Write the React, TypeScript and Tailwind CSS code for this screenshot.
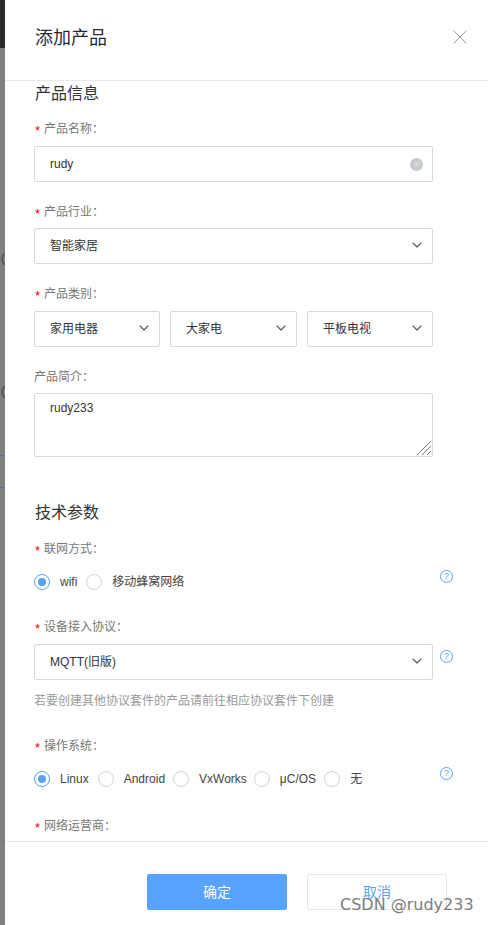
import React from 'react';
import { ChevronDown, X } from 'lucide-react';

const Label = ({ text, required = true, className = '' }: { text: string; required?: boolean; className?: string }) => (
  <div className={`flex items-center h-[18px] text-[12px] text-[#777] ${className}`}>
    {required && <span className="text-[#f00] w-[10px] text-[13px] leading-[18px] pl-[1px] translate-y-[2px]">*</span>}
    <span>{text}：</span>
  </div>
);

const Select = ({ value, className = '' }: { value: string; className?: string }) => (
  <div className={`flex items-center justify-between h-[36px] border border-[#d9d9d9] rounded-[2px] pl-[15px] pr-[7px] text-[12px] text-[#333] ${className}`}>
    <span>{value}</span>
    <ChevronDown className="w-[16px] h-[16px] text-[#555] -mt-[2px]" strokeWidth={1.6} />
  </div>
);

const Help = ({ className = '' }: { className?: string }) => (
  <div className={`w-[13px] h-[13px] rounded-full border border-[#5aa2f8] text-[#5aa2f8] text-[9px] leading-[11px] text-center shrink-0 ${className}`}>?</div>
);

const Radio = ({ text, checked = false, className = '' }: { text: string; checked?: boolean; className?: string }) => (
  <div className={`flex items-center ${className}`}>
    <div className={`w-[16px] h-[16px] rounded-full flex items-center justify-center ${checked ? 'border-[1.5px] border-[#57a3f3]' : 'border border-[#d4d4d4]'}`}>
      {checked && <div className="w-[8px] h-[8px] rounded-full bg-[#57a3f3]" />}
    </div>
    <span className="ml-[10px] text-[12px] text-[#444]">{text}</span>
  </div>
);

export default function App() {
  return (
    <div className="h-[925px] w-[488px] flex bg-[#808080] overflow-hidden" style={{ fontFamily: '"Liberation Sans", "Noto Sans CJK SC", sans-serif' }}>
      {/* page behind the dimmed overlay */}
      <div className="relative w-[5px] shrink-0 overflow-hidden flex flex-col">
        <div className="h-[48px] shrink-0 bg-[#2b2b2b]" />
        <div className="h-[407px] shrink-0 bg-[#808080]" />
        <div className="h-[33px] shrink-0 bg-[#808080] border-y border-[#4a6fa5]" />
        <div className="flex-1 bg-[#808080]" />
        <span className="absolute left-[1px] top-[250px] text-[12px] leading-[16px] text-[#3a3f4a]">(</span>
        <span className="absolute left-[1px] top-[383px] text-[12px] leading-[16px] text-[#3a3f4a]">(</span>
      </div>
      <div className="flex-1 bg-white flex flex-col">
        <header className="h-[81px] shrink-0 border-b border-[#e8e8e8] flex justify-between pl-[30px] pr-[16px] pt-[25px]">
          <h1 className="text-[18px] leading-[26px] text-[#1f2937]">添加产品</h1>
          <X className="w-[24px] h-[24px] text-[#999]" strokeWidth={1} />
        </header>

        <div className="flex-1 overflow-hidden pl-[29px]">
          <div className="w-[399px]">
            <h2 className="mt-[1px] pl-[1px] text-[16px] leading-[24px] text-[#333]">产品信息</h2>

            <Label text="产品名称" className="mt-[14px]" />
            <div className="mt-[8px] flex items-center justify-between h-[36px] border border-[#d9d9d9] rounded-[2px] pl-[15px] pr-[9px] text-[12px] text-[#333]">
              <span>rudy</span>
              <div className="w-[13px] h-[13px] rounded-full bg-[#c5cad0] flex items-center justify-center">
                <X className="w-[9px] h-[9px] text-white" strokeWidth={1.5} />
              </div>
            </div>

            <Label text="产品行业" className="mt-[21px]" />
            <Select value="智能家居" className="mt-[7px]" />

            <Label text="产品类别" className="mt-[21px]" />
            <div className="mt-[8px] flex gap-[10px]">
              <Select value="家用电器" className="w-[126px]" />
              <Select value="大家电" className="w-[127px]" />
              <Select value="平板电视" className="w-[126px]" />
            </div>

            <Label text="产品简介" required={false} className="mt-[21px]" />
            <div className="mt-[7px] relative h-[64px] border border-[#d9d9d9] rounded-[2px] pl-[15px] pt-[5px] text-[12px] leading-[18px] text-[#333]">
              rudy233
              <svg className="absolute right-[1px] bottom-[1px] w-[14px] h-[14px]" viewBox="0 0 14 14" stroke="#777" strokeWidth="1">
                <path d="M0 14 14 0M5 14 14 5M10 14 14 10" />
              </svg>
            </div>

            <h2 className="mt-[44px] pl-[1px] text-[16px] leading-[24px] text-[#333]">技术参数</h2>

            <Label text="联网方式" className="mt-[15px]" />
            <div className="mt-[15px] flex items-start">
              <div className="flex gap-[9px] w-[406px] shrink-0">
                <Radio text="wifi" checked />
                <Radio text="移动蜂窝网络" />
              </div>
              <Help className="-mt-[3px]" />
            </div>

            <Label text="设备接入协议" className="mt-[27px]" />
            <div className="mt-[8px] flex w-[420px] items-start">
              <Select value="MQTT(旧版)" className="w-[399px] shrink-0" />
              <Help className="ml-[7px] mt-[6px]" />
            </div>
            <p className="mt-[12px] text-[12px] leading-[18px] text-[#999] whitespace-nowrap">若要创建其他协议套件的产品请前往相应协议套件下创建</p>

            <Label text="操作系统" className="mt-[27px]" />
            <div className="mt-[15px] flex items-start">
              <div className="flex gap-[8px] w-[406px] shrink-0">
                <Radio text="Linux" checked className="mr-[1px]" />
                <Radio text="Android" />
                <Radio text="VxWorks" className="-mr-[1px]" />
                <Radio text="μC/OS" />
                <Radio text="无" />
              </div>
              <Help className="-mt-[3px]" />
            </div>

            <Label text="网络运营商" className="mt-[29px]" />
          </div>
        </div>

        <footer className="relative h-[84px] shrink-0 border-t border-[#e8e8e8] flex pl-[142px] pt-[32px] gap-[20px]">
          <button className="w-[140px] h-[36px] rounded-[2px] bg-[#57a3ff] text-white text-[14px]">确定</button>
          <button className="w-[140px] h-[36px] rounded-[2px] border border-[#e5e5e5] text-[#57a3ff] text-[14px]">取消</button>
          <span className="absolute left-[335px] top-[51px] text-[16px] leading-[24px] text-[#7d7d7d] whitespace-nowrap" style={{ fontFamily: '"DejaVu Sans", sans-serif' }}>CSDN @rudy233</span>
        </footer>
      </div>
    </div>
  );
}
